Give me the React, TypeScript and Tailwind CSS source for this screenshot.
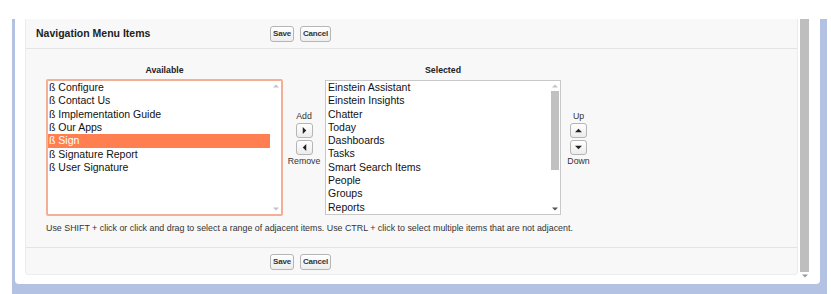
import React from "react";

const available = [
  "ß Configure",
  "ß Contact Us",
  "ß Implementation Guide",
  "ß Our Apps",
  "ß Sign",
  "ß Signature Report",
  "ß User Signature",
];

const selected = [
  "Einstein Assistant",
  "Einstein Insights",
  "Chatter",
  "Today",
  "Dashboards",
  "Tasks",
  "Smart Search Items",
  "People",
  "Groups",
  "Reports",
];

const Btn = ({ label }: { label: string }) => (
  <button className="h-[16px] px-[2px] rounded-[3px] border border-[#b5b5b5] bg-gradient-to-b from-white to-[#ededed] text-[8px] font-bold text-[#333] leading-none tracking-[-0.2px]">
    {label}
  </button>
);

type Dir = "right" | "left" | "up" | "down";

const Tri = ({ dir, color = "#222", size = 4 }: { dir: Dir; color?: string; size?: number }) => {
  const paths: Record<Dir, string> = {
    right: "M2 0 L6 4 L2 8 Z",
    left: "M6 0 L2 4 L6 8 Z",
    up: "M0 6 L4 2 L8 6 Z",
    down: "M0 2 L4 6 L8 2 Z",
  };
  return (
    <svg width={size * 2} height={size * 2} viewBox="0 0 8 8">
      <path d={paths[dir]} fill={color} />
    </svg>
  );
};

const ArrowBtn = ({ dir }: { dir: Dir }) => (
  <div className="w-[17px] h-[15px] rounded-[3px] border border-[#b5b5b5] bg-gradient-to-b from-white to-[#ececec] flex items-center justify-center">
    <Tri dir={dir} size={3.5} />
  </div>
);

export default function App() {
  return (
    <div
      className="w-[831px] h-[294px] bg-white pt-[19px] pl-[12px] overflow-hidden"
      style={{ fontFamily: '"Liberation Sans", Arial, sans-serif' }}
    >
      <div className="w-[815px] h-[275px] bg-[#b3c2e2] pl-[3px] pr-[7px] pb-[10px]">
        <div className="h-full bg-white rounded-b-[4px] flex pl-[10px]">
          {/* main panel */}
          <div className="w-[773px] h-[256px] bg-[#f8f8f8] border-x border-b border-[#ececec] rounded-b-[4px] flex flex-col">
            <div className="h-[30px] border-b border-[#e3e3e3] flex items-center pl-[10px] pt-[1px]">
              <div className="w-[234px] text-[10.5px] font-bold text-[#222]">Navigation Menu Items</div>
              <div className="flex gap-[6px]">
                <Btn label="Save" />
                <Btn label="Cancel" />
              </div>
            </div>

            <div className="flex-1 pl-[20px] pt-[14px]">
              <div className="flex">
                {/* available */}
                <div className="w-[237px] flex flex-col">
                  <div className="text-center text-[8.75px] font-bold text-[#222] h-[14px] leading-[14px]">Available</div>
                  <div className="mt-[2px] h-[137px] border-2 border-[#f4ae95] rounded-[2px] bg-white flex">
                    <div className="flex-1">
                      {available.map((item) => (
                        <div
                          key={item}
                          className={
                            item === "ß Sign"
                              ? "h-[13.35px] leading-[13.35px] text-[10.5px] pl-[1px] bg-[#ff7f50] text-white"
                              : "h-[13.35px] leading-[13.35px] text-[10.5px] pl-[1px] text-[#111]"
                          }
                        >
                          {item}
                        </div>
                      ))}
                    </div>
                    <div className="w-[11px] flex flex-col items-center justify-between py-[2px]">
                      <Tri dir="up" color="#c4c4c4" size={3} />
                      <Tri dir="down" color="#c4c4c4" size={3} />
                    </div>
                  </div>
                </div>

                {/* add / remove */}
                <div className="w-[42px] flex flex-col items-center pt-[48px] text-[8.75px] text-[#333]">
                  <div className="leading-[11px]">Add</div>
                  <div className="mt-[1px] flex flex-col gap-[2px]">
                    <ArrowBtn dir="right" />
                    <ArrowBtn dir="left" />
                  </div>
                  <div className="leading-[11px] mt-[1px]">Remove</div>
                </div>

                {/* selected */}
                <div className="w-[236px] flex flex-col">
                  <div className="text-center text-[8.75px] font-bold text-[#222] h-[14px] leading-[14px]">Selected</div>
                  <div className="mt-[3px] h-[135px] border border-[#c8c8c8] bg-white flex">
                    <div className="flex-1 pl-[2px]">
                      {selected.map((item) => (
                        <div key={item} className="h-[13.3px] leading-[13.3px] text-[10.5px] text-[#111]">
                          {item}
                        </div>
                      ))}
                    </div>
                    <div className="w-[11px] flex flex-col items-center py-[2px]">
                      <Tri dir="up" color="#c4c4c4" size={3} />
                      <div className="w-[8px] h-[79px] bg-[#c1c1c1] mt-[2px]" />
                      <div className="flex-1" />
                      <Tri dir="down" color="#555" size={3} />
                    </div>
                  </div>
                </div>

                {/* up / down */}
                <div className="w-[35px] flex flex-col items-center pt-[48px] text-[8.75px] text-[#333]">
                  <div className="leading-[11px]">Up</div>
                  <div className="mt-[1px] flex flex-col gap-[2px]">
                    <ArrowBtn dir="up" />
                    <ArrowBtn dir="down" />
                  </div>
                  <div className="leading-[11px] mt-[1px]">Down</div>
                </div>
              </div>

              <p className="mt-[7px] text-[8.87px] text-[#333] leading-[11px]">
                Use SHIFT + click or click and drag to select a range of adjacent items. Use CTRL + click to select multiple items that are not adjacent.
              </p>
            </div>

            <div className="h-[27px] border-t border-[#e3e3e3] flex items-center pl-[244px] gap-[6px] pt-[1px]">
              <Btn label="Save" />
              <Btn label="Cancel" />
            </div>
          </div>

          {/* page scrollbar */}
          <div className="ml-[2px] w-[9px] flex flex-col items-center">
            <div className="w-[9px] h-[253px] bg-[#bebebe]" />
            <div className="mt-[1px]">
              <Tri dir="down" color="#999" size={3} />
            </div>
          </div>
        </div>
      </div>
    </div>
  );
}
